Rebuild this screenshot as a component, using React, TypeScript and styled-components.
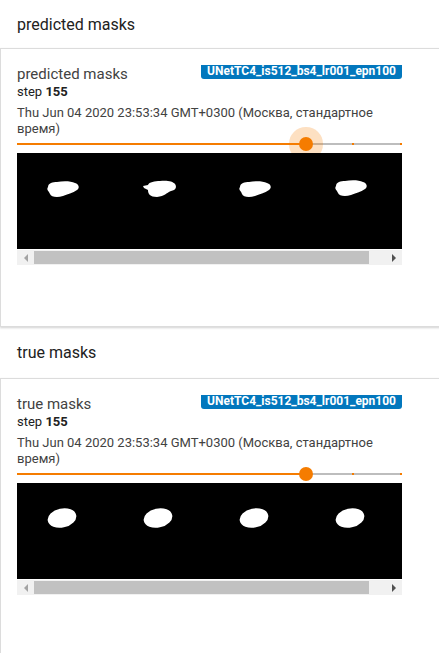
import { createGlobalStyle, styled } from "styled-components";

const GlobalStyle = createGlobalStyle`
  html, body {
    margin: 0;
    padding: 0;
    background: #fff;
    overflow: hidden;
  }
  body {
    font-family: Roboto, "Noto Sans", "Liberation Sans", sans-serif;
    color: #212121;
  }
`;

const Page = styled.div`
  display: flex;
  flex-direction: column;
`;

const SectionHeader = styled.div<{ h: number }>`
  height: ${(p) => p.h}px;
  display: flex;
  align-items: center;
  padding: 0 17px;
  font-size: 16px;
  color: #212121;
`;

const Card = styled.div`
  box-sizing: border-box;
  height: 279px;
  margin-right: -20px;
  border: 1px solid #dcdcdc;
  border-right: none;
  box-shadow: 0 1px 2px rgba(0, 0, 0, 0.18);
  padding: 15px 16px 0;
  background: #fff;
`;

const Content = styled.div`
  width: 385px;
  display: flex;
  flex-direction: column;
`;

const TitleRow = styled.div`
  display: flex;
  justify-content: space-between;
  align-items: flex-start;
  height: 20px;
`;

const CardTitle = styled.div`
  font-size: 15px;
  line-height: 20px;
  color: #424242;
`;

const RunBadge = styled.div`
  margin-top: 1px;
  height: 14px;
  overflow: hidden;
  background: #0277bd;
  color: #fff;
  font-weight: 700;
  font-size: 12px;
  line-height: 12px;
  padding: 0 6px;
  border-radius: 0 0 3px 3px;
`;

const Step = styled.div`
  font-size: 13px;
  line-height: 16px;
  color: #212121;
  b {
    font-weight: 700;
  }
`;

const Stamp = styled.div`
  margin-top: 5px;
  font-size: 13px;
  line-height: 16px;
  color: #424242;
`;

const Slider = styled.div`
  position: relative;
  height: 14px;
  margin-bottom: 2px;
`;

const Track = styled.div`
  position: absolute;
  left: 0;
  right: 0;
  top: 6px;
  height: 2px;
  background: #bdbdbd;
`;

const Filled = styled.div`
  position: absolute;
  left: 0;
  top: 6px;
  height: 2px;
  background: #f57c00;
`;

const Tick = styled.div`
  position: absolute;
  top: 6px;
  width: 2px;
  height: 2px;
  background: #f57c00;
`;

const Thumb = styled.div<{ $halo: boolean }>`
  position: absolute;
  top: 0;
  width: 14px;
  height: 14px;
  margin-left: -7px;
  border-radius: 50%;
  background: #f57c00;
  box-shadow: ${(p) =>
    p.$halo ? "0 0 0 10px rgba(245, 124, 0, 0.24)" : "none"};
`;

// 이미지가 슬라이더 halo 위에 그려지도록 relative
const ImageBox = styled.div`
  position: relative;
  display: flex;
  flex-direction: column;
  gap: 1px;
  background: #fff;
`;

const MaskImage = styled.svg`
  display: block;
  width: 385px;
  height: 96px;
`;

const ScrollBar = styled.div`
  height: 15px;
  background: #f1f1f1;
  display: flex;
  align-items: center;
`;

const Arrow = styled.div<{ dir: "l" | "r" }>`
  width: 17px;
  display: flex;
  justify-content: center;
  &::before {
    content: "";
    width: 0;
    height: 0;
    border-top: 4px solid transparent;
    border-bottom: 4px solid transparent;
    ${(p) =>
      p.dir === "l"
        ? "border-right: 4px solid #a3a3a3;"
        : "border-left: 4px solid #505050;"}
  }
`;

const ScrollTrack = styled.div`
  flex: 1;
  height: 13px;
  display: flex;
`;

const ScrollThumb = styled.div`
  width: 335px;
  height: 13px;
  background: #c1c1c1;
`;

const blobOffsets = [0, 96, 192, 288];

// 예측 마스크는 울퉁불퉁한 모양
const predBlob =
  "M31 34 C31 30 36 29 40 29 C46 28 54 28 58 30 C62 31 63 35 60 37 C56 40 50 41 46 43 C40 45 34 44 33 41 C32 38 29 37 31 34 Z";
const predBlob2 =
  "M126 33 L131 32 C132 29 138 28 143 28 C149 27 156 28 158 31 C160 34 159 37 154 38 C149 40 148 43 140 44 C133 44 131 41 131 37 L127 35 Z";

const trueBlob = (cx: number) => (
  <ellipse cx={cx} cy={35} rx={14.5} ry={9.5} transform={`rotate(-12 ${cx} 35)`} fill="#fff" />
);

function MaskStrip({ kind }: { kind: "pred" | "true" }) {
  return (
    <MaskImage viewBox="0 0 385 96">
      <rect width="385" height="96" fill="#000" />
      {kind === "pred" ? (
        <>
          <path d={predBlob} fill="#fff" />
          <path d={predBlob2} fill="#fff" />
          <path d={predBlob} transform="translate(192 0)" fill="#fff" />
          <path d={predBlob} transform="translate(288 -1)" fill="#fff" />
        </>
      ) : (
        blobOffsets.map((o) => <g key={o}>{trueBlob(45 + o)}</g>)
      )}
    </MaskImage>
  );
}

function ImageCard({ title, kind, halo }: { title: string; kind: "pred" | "true"; halo: boolean }) {
  return (
    <Card>
      <Content>
        <TitleRow>
          <CardTitle>{title}</CardTitle>
          <RunBadge>UNetTC4_is512_bs4_lr001_epn100</RunBadge>
        </TitleRow>
        <Step>
          step <b>155</b>
        </Step>
        <Stamp>Thu Jun 04 2020 23:53:34 GMT+0300 (Москва, стандартное время)</Stamp>
        <Slider>
          <Track />
          <Filled style={{ width: 289 }} />
          <Tick style={{ left: 335 }} />
          <Tick style={{ left: 383 }} />
          <Thumb $halo={halo} style={{ left: 289 }} />
        </Slider>
        <ImageBox>
          <MaskStrip kind={kind} />
          <ScrollBar>
            <Arrow dir="l" />
            <ScrollTrack>
              <ScrollThumb />
            </ScrollTrack>
            <Arrow dir="r" />
          </ScrollBar>
        </ImageBox>
      </Content>
    </Card>
  );
}

export default function App() {
  return (
    <Page>
      <GlobalStyle />
      <SectionHeader h={48}>predicted masks</SectionHeader>
      <ImageCard title="predicted masks" kind="pred" halo />
      <SectionHeader h={51}>true masks</SectionHeader>
      <ImageCard title="true masks" kind="true" halo={false} />
    </Page>
  );
}
